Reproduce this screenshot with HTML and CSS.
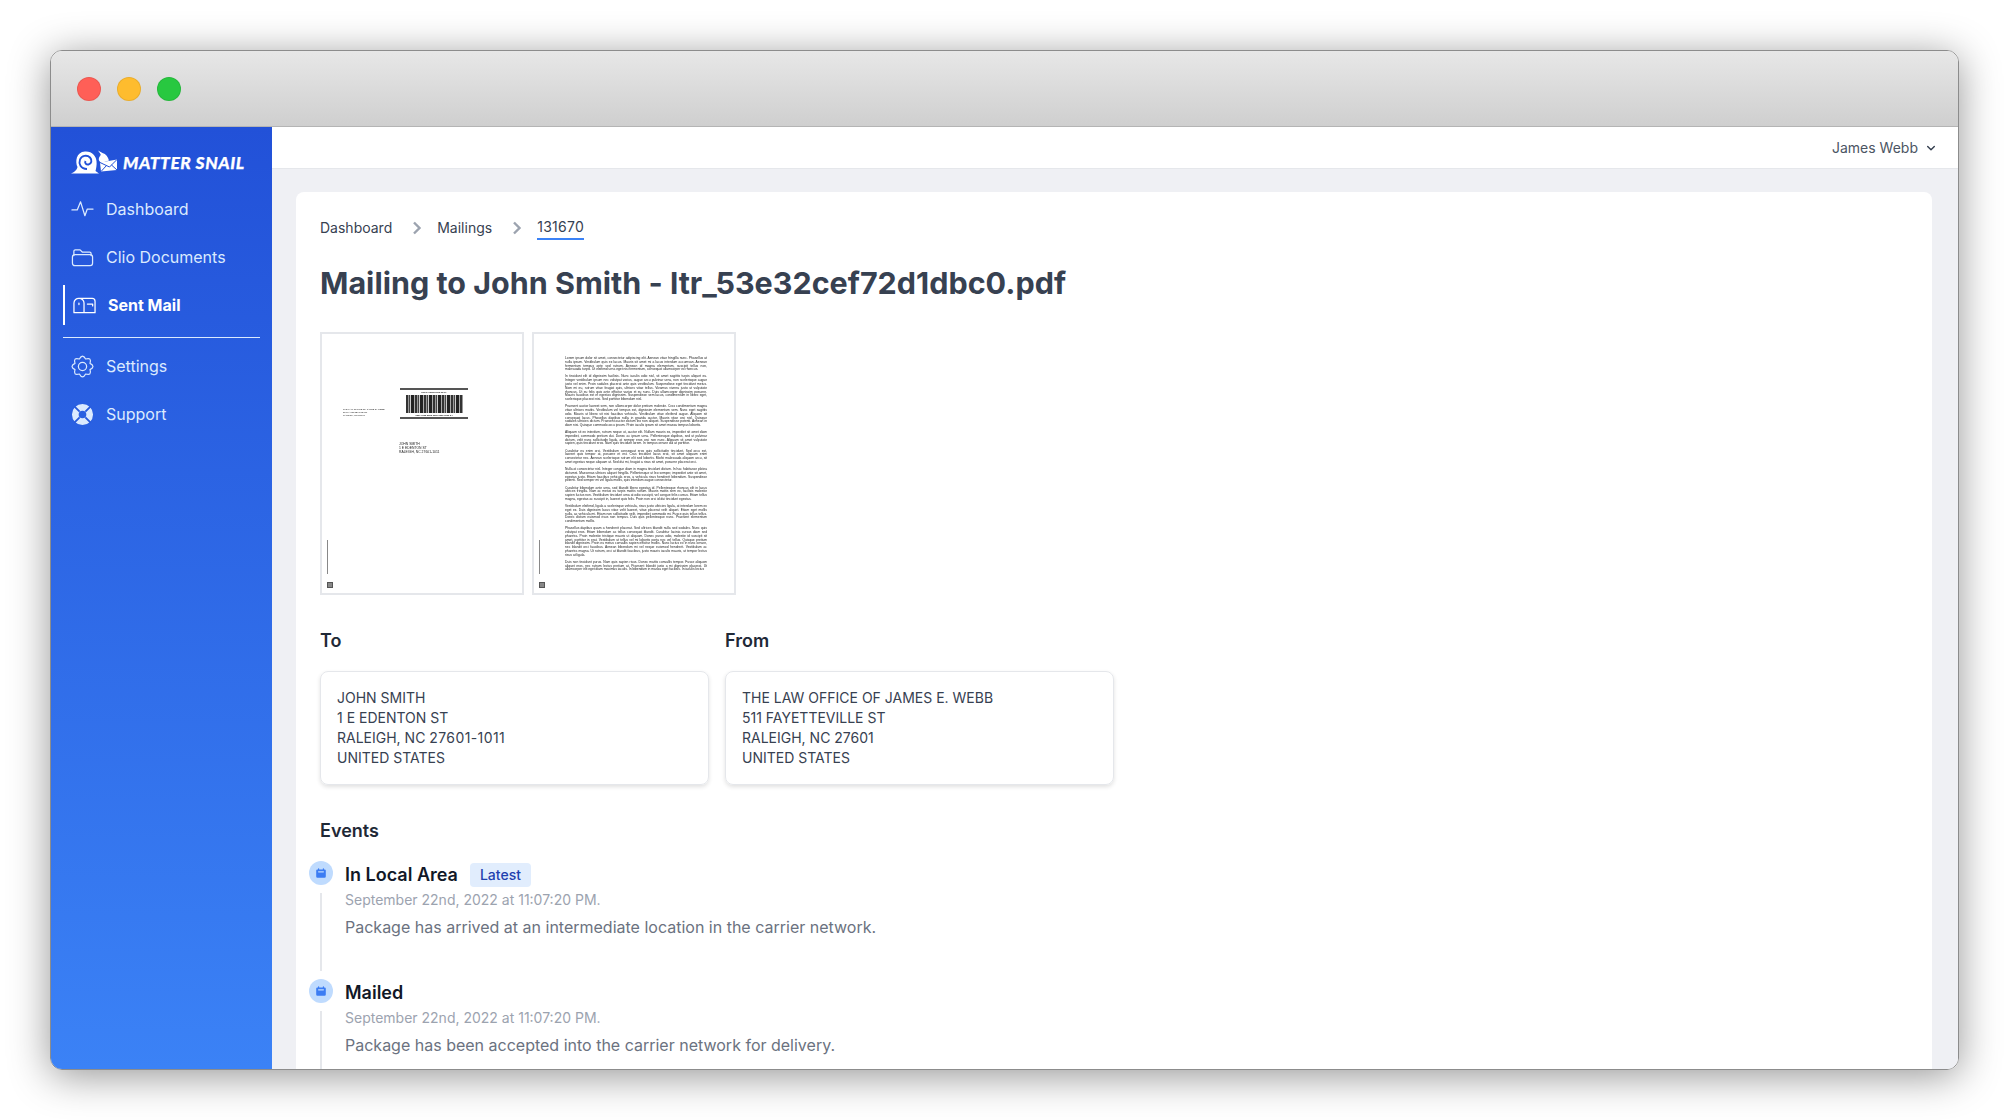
FILE: index.html
```html
<!DOCTYPE html>
<html lang="en">
<head>
<meta charset="utf-8">
<title>Matter Snail</title>
<link rel="stylesheet" href="styles.css">
</head>
<body>
<div class="window">
  <div class="titlebar">
    <span class="light red"></span><span class="light yellow"></span><span class="light green"></span>
  </div>
  <div class="app">
    <aside class="sidebar">
      <div class="logo">
        <svg class="logo-mark" viewBox="0 0 47 24" fill="none">
          <path d="M0 23.500 C3 22.500 6 20 6.500 17 C4 12 5 2 14 1.500 C21 1 25 6 25.500 11 C26 15 25 19 24.500 21 L28 23.500 Z" fill="#fff"/>
          <path d="M16 19 C9.500 19 7.500 13.500 9 9.500 C10.500 5.500 16 4.500 19 7.500 C21.500 10.200 20.500 14 17.500 14.500 C15 14.800 13.500 13 14.500 11" stroke="#2251d8" stroke-width="1.900"/>
          <path d="M27 0.500 L31.500 3 C35 4 37 7 38 10.500 L30 13 L28 10.500 C27 7 30.500 5.500 29.500 4 Z" fill="#fff"/>
          <path d="M29 12.500 L46 9.500 L46 20 L30 21.500 Z" fill="#fff"/>
          <path d="M29 12.500 L38.500 17 L46 9.500 M30 21.500 L35.500 15.500 M46 20 L40.500 15" stroke="#2251d8" stroke-width="1"/>
        </svg>
        <span class="logo-text">MATTER SNAIL</span>
      </div>
      <nav class="nav">
        <a class="nav-item">
          <svg class="nav-icon" viewBox="0 0 24 24" fill="none" stroke="currentColor" stroke-width="1.300" stroke-linecap="round" stroke-linejoin="round"><path d="M1 12.500 H6.500 L10 4 L14.500 18.500 L17 11.500 H23"/></svg>
          <span>Dashboard</span>
        </a>
        <a class="nav-item">
          <svg class="nav-icon" viewBox="0 0 24 24" fill="none" stroke="currentColor" stroke-width="1.300" stroke-linecap="round" stroke-linejoin="round"><path d="M3 10V5.500A1.500 1.500 0 0 1 4.500 4H9.500L12 6.500H19.500A1.500 1.500 0 0 1 21 8V10"/><rect x="1.500" y="9" width="21" height="11.500" rx="2.500"/></svg>
          <span>Clio Documents</span>
        </a>
        <a class="nav-item active">
          <svg class="nav-icon" viewBox="0 0 24 24" fill="none" stroke="currentColor" stroke-width="1.300" stroke-linecap="round" stroke-linejoin="round"><path d="M6.500 4.500H20A3 3 0 0 1 23 7.500V19.500H1V9.500A5 5 0 0 1 6.500 4.500ZM6.500 4.500A5 5 0 0 1 11.500 9.500V19.500"/><path d="M6.200 9.500V11M15 10.500H20.500V12.500"/></svg>
          <span>Sent Mail</span>
        </a>
        <div class="nav-divider"></div>
        <a class="nav-item">
          <svg class="nav-icon" viewBox="0 0 24 24" fill="none" stroke="currentColor" stroke-width="1.300" stroke-linecap="round" stroke-linejoin="round"><path d="M8.750 4.150Q12 -2 15.250 4.150Q21.900 2.100 19.850 8.750Q26 12 19.850 15.250Q21.900 21.900 15.250 19.850Q12 26 8.750 19.850Q2.100 21.900 4.150 15.250Q-2 12 4.150 8.750Q2.100 2.100 8.750 4.150Z"/><circle cx="12" cy="12" r="4.300"/></svg>
          <span>Settings</span>
        </a>
        <a class="nav-item">
          <svg class="nav-icon" viewBox="0 0 24 24"><path fill="currentColor" fill-rule="evenodd" d="M12 1a11 11 0 1 0 0 22 11 11 0 0 0 0-22Zm0 7a4 4 0 1 1 0 8 4 4 0 0 1 0-8Z"/><path d="M9 9 3.500 3.500M15 9 20.500 3.500M9 15 3.500 20.500M15 15 20.500 20.500" stroke="#2659dd" stroke-width="1.900"/></svg>
          <span>Support</span>
        </a>
      </nav>
    </aside>
    <div class="main">
      <header class="topbar">
        <span>James Webb</span>
        <svg class="chevron" viewBox="0 0 20 20" fill="none" stroke="currentColor" stroke-width="2.400" stroke-linecap="round" stroke-linejoin="round"><path d="M4.500 7.500 10 13l5.500-5.500"/></svg>
      </header>
      <div class="canvas">
        <section class="card">
          <div class="crumbs">
            <span>Dashboard</span>
            <svg class="crumb-sep" viewBox="0 0 10 14" fill="none" stroke="currentColor" stroke-width="2.400"><path d="M2 1.500 7.500 7 2 12.500"/></svg>
            <span>Mailings</span>
            <svg class="crumb-sep" viewBox="0 0 10 14" fill="none" stroke="currentColor" stroke-width="2.400"><path d="M2 1.500 7.500 7 2 12.500"/></svg>
            <span class="crumb-current">131670</span>
          </div>
          <h1 class="title">Mailing to John Smith - ltr_53e32cef72d1dbc0.pdf</h1>
          <div class="thumbs">
            <div class="page">
              <div class="from-block">THE LAW OFFICE OF JAMES E. WEBB<br>511 FAYETTEVILLE ST<br>RALEIGH, NC 27601</div>
              <div class="stamp">
                <div class="stamp-rule"></div>
                <div class="stamp-label">USPS CERTIFIED MAIL</div>
                <div class="barcode"></div>
                <div class="stamp-label">9307 1902 2593 0000 0000 0000 24</div>
                <div class="stamp-rule"></div>
              </div>
              <div class="to-block">JOHN SMITH<br>1 E EDENTON ST<br>RALEIGH, NC 27601-1011</div>
              <span class="mark-line"></span><span class="mark-box"></span>
            </div>
            <div class="page page-text">
              <p>Lorem ipsum dolor sit amet, consectetur adipiscing elit. Aenean vitae fringilla nunc. Phasellus at nulla ipsum. Vestibulum quis ex lacus. Mauris sit amet mi a lacus interdum accumsan. Aenean fermentum tempus ante sed rutrum. Aenean id magna elementum, suscipit tellus non, malesuada turpis. Ut eleifend urna eget nisi fermentum, consequat ullamcorper ex rhoncus.</p>
              <p>In tincidunt elit id dignissim facilisis. Nunc iaculis odio nisl, sit amet sagittis turpis aliquet eu. Integer vestibulum ipsum nec volutpat varius, augue arcu pulvinar urna, non scelerisque augue justo vel enim. Proin sodales placerat ante quis vestibulum. Suspendisse eget tincidunt metus. Nam mi eu, rutrum vitae feugiat quis, ultrices vitae tellus. Vivamus viverra justo ut vulputate rhoncus. Ut eu felis quis ante efficitur varius et eu nunc. Duis ullamcorper dignissim posuere. Mauris faucibus est et egestas dignissim. Suspendisse sem lacus, condimentum in libero eget, scelerisque placerat nisi. Sed porttitor bibendum nisl.</p>
              <p>Praesent auctor laoreet sem, non ullamcorper dolor pretium molestie. Cras condimentum magna vitae ultrices mattis. Vestibulum vel tempus est, dignissim elementum sem. Nunc eget sagittis odio. Mauris ut libero sit nisi faucibus vehicula. Vestibulum vitae eleifend augue. Aliquam sit consequat lacus. Phasellus dapibus nulla in gravida auctor. Mauris vitae orci nisl. Quisque sodales ultricies dictum. Praesent auctor dictum leo non aliquet. Suspendisse potenti. Aenean in diam nisi. Quisque commodo arcu ipsum. Proin iaculis ipsum sit amet massa tempus lobortis.</p>
              <p>Aliquam sit ex interdum, rutrum neque ut, auctor elit. Nullam mauris ex, imperdiet sit amet diam imperdiet, commodo pretium dui. Donec ac ipsum urna. Pellentesque dapibus, sed ut pulvinar dictum, velit nunc sollicitudin ligula, at semper eros orci non nunc. Aliquam sit amet vulputate sapien, quis tincidunt eros. Nam quis tincidunt lorem. In tempus ornare dui at porttitor.</p>
              <p>Curabitur eu enim orci. Vestibulum consequat eros quis sollicitudin tincidunt. Sed arcu est, laoreet quis tempor at, posuere et est. Cras tincidunt lacus erat, sit amet aliquam enim consectetur nec. Aenean scelerisque rutrum elit sed lobortis. Morbi malesuada aliquam arcu, sit amet egestas neque aliquam ut. Sed dui mi, feugiat a risus sit amet, posuere placerat orci.</p>
              <p>Nulla at consectetur nisl. Integer congue diam in magna tincidunt dictum. In hac habitasse platea dictumst. Maecenas ultrices aliquet fringilla. Pellentesque ut leo semper, imperdiet ante sit amet, egestas justo. Etiam faucibus vehicula eros, a vehicula risus hendrerit bibendum. Suspendisse potenti. Sed semper mi vel ligula mollis, quis interdum augue consectetur.</p>
              <p>Curabitur bibendum ante urna, sed blandit libero egestas id. Pellentesque rhoncus elit in lacus ultrices fringilla. Nam ac metus eu turpis mattis rutrum. Mauris mattis sem ex, facilisis molestie sapien luctus non. Vestibulum tincidunt urna at odio suscipit, vel congue felis cursus. Etiam tellus magna, egestas ac suscipit in, laoreet quis felis. Proin non orci id dui tincidunt egestas.</p>
              <p>Vestibulum eleifend, ligula a scelerisque vehicula, risus justo ultricies ligula, at interdum lorem ex eget ex. Duis dignissim lacus vitae velit laoreet, vitae placerat velit aliquet. Etiam eget mollis nulla, ac vehicula mi. Etiam non sollicitudin velit, imperdiet commodo mi. Fusce quis tellus tellus. Donec dictum euismod risus non tempus. Duis quis pellentesque nunc. Praesent elementum condimentum mollis.</p>
              <p>Phasellus dapibus quam a hendrerit placerat. Sed ultrices blandit nulla sed sodales. Nunc quis volutpat eros. Etiam bibendum ac tellus consequat blandit. Curabitur lacinia cursus diam sed pharetra. Proin molestie tristique mauris ut aliquam. Donec purus odio, molestie id suscipit sit amet, porttitor in erat. Vestibulum ut tellus vel mi lobortis porta nec vel tellus. Quisque pretium blandit dignissim. Proin eu metus convallis sapien efficitur mollis. Nunc luctus ex in nunc ornare, nec blandit orci faucibus. Aenean bibendum mi vel neque euismod hendrerit. Vestibulum ac pharetra magna. Ut rutrum, orci at blandit faucibus, justo mauris iaculis mauris, ut tempor lectus risus at ligula.</p>
              <p>Duis non tincidunt purus. Nam quis sapien risus. Donec mattis convallis tempor. Fusce aliquam aliquet eros, nec rutrum lectus pretium at. Praesent blandit justo a mi dignissim placerat. Ut ullamcorper elit eget diam maximus iaculis. In bibendum in massa eget facilisis. In iaculis lectus</p>
              <span class="mark-line"></span><span class="mark-box"></span>
            </div>
          </div>
          <div class="addresses">
            <div class="address">
              <h2 class="subhead">To</h2>
              <div class="address-box">JOHN SMITH<br>1 E EDENTON ST<br>RALEIGH, NC <span class="zip">27601-1011</span><br>UNITED STATES</div>
            </div>
            <div class="address">
              <h2 class="subhead">From</h2>
              <div class="address-box">THE LAW OFFICE OF JAMES E. WEBB<br>511 FAYETTEVILLE ST<br>RALEIGH, NC 27601<br>UNITED STATES</div>
            </div>
          </div>
          <h2 class="subhead events-head">Events</h2>
          <ol class="timeline">
            <li class="event">
              <div class="rail">
                <span class="dot"><svg viewBox="0 0 20 20"><path fill="currentColor" fill-rule="evenodd" d="M6 2a1 1 0 0 0-1 1v1H4a2 2 0 0 0-2 2v10a2 2 0 0 0 2 2h12a2 2 0 0 0 2-2V6a2 2 0 0 0-2-2h-1V3a1 1 0 1 0-2 0v1H7V3a1 1 0 0 0-1-1zm0 5a1 1 0 0 0 0 2h8a1 1 0 1 0 0-2H6z"/></svg></span>
                <span class="rail-line"></span>
              </div>
              <div class="event-body">
                <div class="event-head"><h3 class="event-title">In Local Area</h3><span class="badge">Latest</span></div>
                <time class="event-date">September 22nd, 2022 at 11:07:20 PM.</time>
                <p class="event-desc">Package has arrived at an intermediate location in the carrier network.</p>
              </div>
            </li>
            <li class="event">
              <div class="rail">
                <span class="dot"><svg viewBox="0 0 20 20"><path fill="currentColor" fill-rule="evenodd" d="M6 2a1 1 0 0 0-1 1v1H4a2 2 0 0 0-2 2v10a2 2 0 0 0 2 2h12a2 2 0 0 0 2-2V6a2 2 0 0 0-2-2h-1V3a1 1 0 1 0-2 0v1H7V3a1 1 0 0 0-1-1zm0 5a1 1 0 0 0 0 2h8a1 1 0 1 0 0-2H6z"/></svg></span>
                <span class="rail-line"></span>
              </div>
              <div class="event-body">
                <div class="event-head"><h3 class="event-title">Mailed</h3></div>
                <time class="event-date">September 22nd, 2022 at 11:07:20 PM.</time>
                <p class="event-desc">Package has been accepted into the carrier network for delivery.</p>
              </div>
            </li>
          </ol>
        </section>
      </div>
    </div>
  </div>
</div>
</body>
</html>
```
FILE: styles.css
```css
* { box-sizing: border-box; }
html, body { height: 100%; }
body {
  margin: 0;
  padding: 50px;
  background: #fff;
  font-family: Inter, "Liberation Sans", sans-serif;
  overflow: hidden;
}
.window {
  width: 1909px;
  height: 1020px;
  display: flex;
  flex-direction: column;
  border: 1px solid #8c8c8c;
  border-radius: 12px;
  overflow: hidden;
  box-shadow: 0 6px 40px rgba(0, 0, 0, .42);
}
.titlebar {
  height: 76px;
  flex: none;
  display: flex;
  align-items: center;
  gap: 16px;
  padding-left: 26px;
  background: linear-gradient(#e7e7e7, #cfcfcf);
  border-bottom: 1px solid #b4b4b4;
}
.light { width: 24px; height: 24px; border-radius: 50%; border: 1px solid rgba(0, 0, 0, .08); }
.red { background: #ff5f57; }
.yellow { background: #febc2e; }
.green { background: #28c840; }
.app { flex: 1; min-height: 0; display: flex; }
.sidebar {
  width: 221px;
  flex: none;
  padding: 23px 12px 0;
  background: linear-gradient(#2251d8, #3b82f6);
  color: #dbeafe;
}
.logo { display: flex; align-items: center; gap: 5px; height: 24px; padding-left: 8px; }
.logo-mark { width: 47px; height: 24px; flex: none; }
.logo-text {
  font: italic 900 17.400px Lato, "Liberation Sans", sans-serif;
  letter-spacing: .55px;
  -webkit-text-stroke: .25px #fff;
  color: #fff;
  white-space: nowrap;
}
.nav { margin-top: 15px; display: flex; flex-direction: column; gap: 8px; }
.nav-item {
  height: 40px;
  display: flex;
  align-items: center;
  gap: 12px;
  padding-left: 8px;
  font-size: 16px;
  line-height: 24px;
}
.nav-icon { width: 23px; height: 23px; flex: none; }
.nav-item.active {
  border-left: 2px solid #fff;
  color: #fff;
  font-weight: 700;
}
.nav-divider { height: 1px; margin: 4px 0 0; background: #dbeafe; }
.main { flex: 1; min-width: 0; display: flex; flex-direction: column; }
.topbar {
  height: 42px;
  flex: none;
  display: flex;
  align-items: center;
  justify-content: flex-end;
  gap: 7px;
  padding-right: 21px;
  background: #fff;
  border-bottom: 1px solid #e5e7eb;
  color: #4b5563;
  font-size: 14px;
}
.chevron { width: 12px; height: 12px; color: #374151; }
.canvas { flex: 1; min-height: 0; overflow: hidden; padding: 23px 26px 0 24px; background: #eff0f4; }
.card { height: 1000px; padding: 24px; background: #fff; border-radius: 8px; }
.crumbs { display: flex; align-items: center; gap: 15.500px; height: 24px; font-size: 14px; color: #374151; }
.crumbs > span:not(.crumb-current) { margin-top: -2px; }
.crumb-sep { width: 10px; height: 14px; margin-left: 4px; color: #9ca3af; }
.crumb-current { padding-bottom: 1px; border-bottom: 2px solid #3b82f6; line-height: 20px; letter-spacing: .3px; }
.title { margin: 22.500px 0 0; font-size: 30.500px; line-height: 40px; font-weight: 700; color: #374151; }
.thumbs { display: flex; gap: 8px; margin-top: 29.500px; }
.page {
  position: relative;
  width: 204px;
  height: 263px;
  background: #fff;
  border: 2.500px solid #e5e7eb;
  font-family: "Liberation Sans", sans-serif;
  color: #222;
  overflow: hidden;
  filter: blur(.25px);
}
.page-text { padding: 23px 27px 0 31px; font-size: 3.300px; line-height: 3.770px; text-align: justify; color: #222; }
.page-text p { margin: 0 0 3.400px; }
.mark-line { position: absolute; left: 5px; top: 206px; width: 1px; height: 34px; background: #888; }
.mark-box { position: absolute; left: 5px; top: 248px; width: 6px; height: 6px; background: #888; border: 1px solid #555; }
.from-block { position: absolute; left: 21px; top: 74px; font-size: 2.300px; line-height: 2.800px; white-space: nowrap; }
.to-block { position: absolute; left: 77px; top: 108px; font-size: 3.400px; line-height: 4.200px; white-space: nowrap; }
.stamp { position: absolute; left: 78px; top: 54px; width: 68px; text-align: center; }
.stamp-rule { height: 2px; background: #555; }
.stamp-label { font-size: 2.300px; line-height: 4.500px; font-weight: 700; white-space: nowrap; }
.barcode {
  height: 18px;
  margin: 0 5px 0 6px;
  background: repeating-linear-gradient(90deg, #333 0 2px, #999 2px 3px, #444 3px 4px, #ccc 4px 5px, #222 5px 7.500px, #aaa 7.500px 9px);
}
.addresses { display: grid; grid-template-columns: 389px 389px; gap: 16px; margin-top: 33px; }
.subhead { margin: 0; font-size: 18px; line-height: 26px; font-weight: 600; color: #1f2937; }
.address-box {
  margin-top: 17px;
  height: 114px;
  padding: 16px;
  border: 1px solid #e5e7eb;
  border-radius: 8px;
  box-shadow: 0 2px 4px rgba(0, 0, 0, .12);
  font-size: 14px;
  line-height: 20px;
  color: #374151;
}
.zip { letter-spacing: .4px; }
.events-head { margin-top: 33px; }
.timeline { list-style: none; margin: 18px 0 0 -11px; padding: 0; }
.event { display: grid; grid-template-columns: 24px 1fr; column-gap: 12px; height: 118px; }
.rail { display: flex; flex-direction: column; align-items: center; gap: 8px; margin-top: -1.500px; }
.dot {
  width: 24px;
  height: 24px;
  flex: none;
  display: flex;
  align-items: center;
  justify-content: center;
  border-radius: 50%;
  background: #bfdbfe;
  color: #3b7cf3;
}
.dot svg { width: 12px; height: 12px; }
.rail-line { width: 1.500px; height: 78px; background: #e5e7eb; }
.event-head { display: flex; align-items: center; gap: 12px; height: 26px; }
.event-title { margin: 0; font-size: 18px; line-height: 26px; font-weight: 600; color: #111827; }
.badge {
  padding: 2px 10px;
  height: 24px;
  border-radius: 4px;
  background: #e1edfd;
  color: #1e40af;
  font-size: 14px;
  line-height: 20px;
  font-weight: 500;
}
.event-date { display: block; margin-top: 2px; font-size: 14px; line-height: 20px; color: #9ca3af; }
.event-desc { margin: 5px 0 0; font-size: 16px; line-height: 24px; color: #6b7280; }
```
